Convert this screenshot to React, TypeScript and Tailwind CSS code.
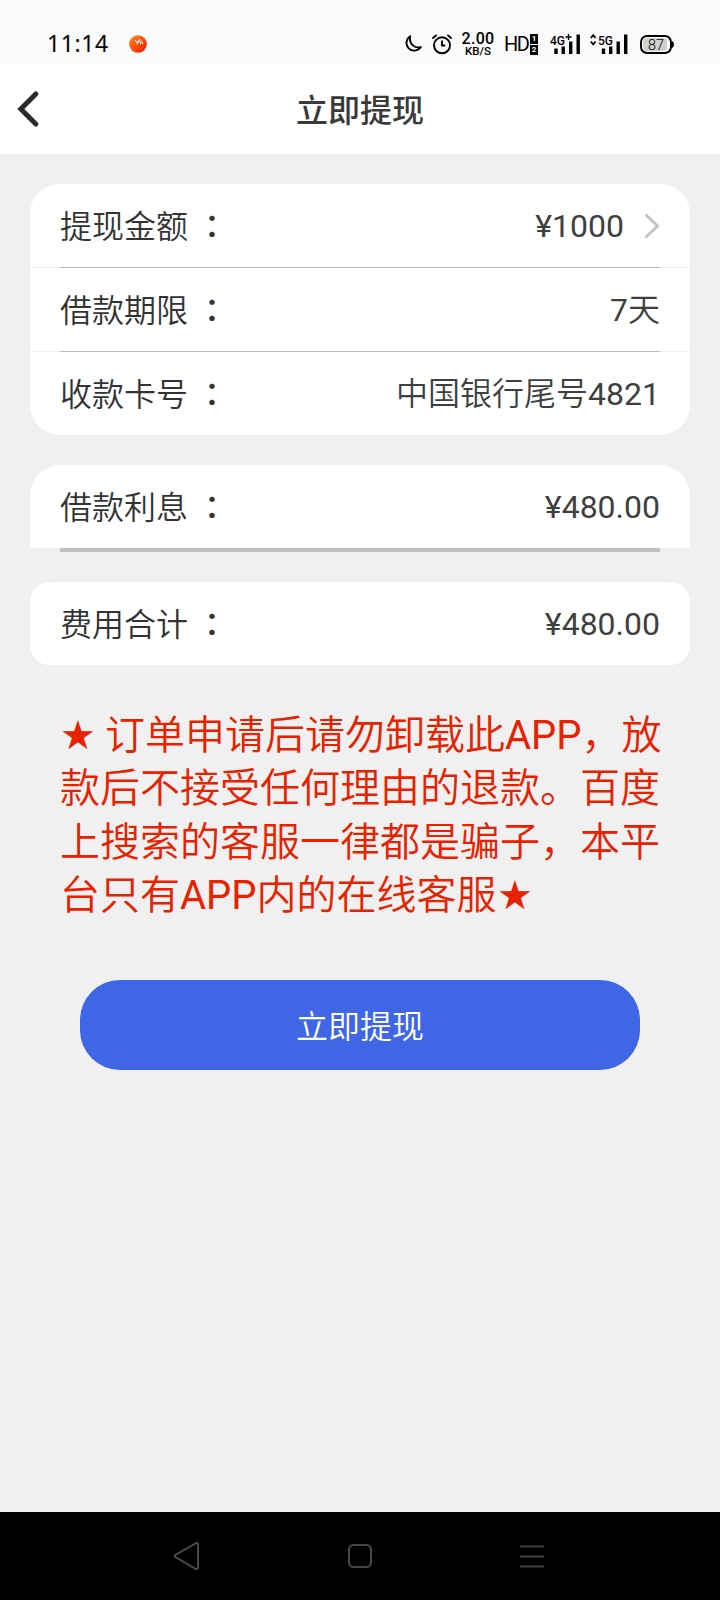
import React from "react";

type RowProps = {
  label: string;
  value: React.ReactNode;
  arrow?: boolean;
};

function StatusBar() {
  return (
    <div className="w-full h-16 bg-[#fafafa] flex items-start justify-between pl-[47px] pr-[46px] text-black">
      <div className="flex items-center h-[46px] mt-[21px]">
        <span className="font-['Noto_Sans'] text-[23px] leading-none tracking-[0.6px] w-[82px] pb-0.5">11:14</span>
        <svg width="18" height="18" viewBox="0 0 18 18">
          <defs>
            <linearGradient id="ball" x1="0" y1="0" x2="1" y2="1">
              <stop offset="0" stopColor="#ff8a1c" />
              <stop offset="0.55" stopColor="#fb4a0c" />
              <stop offset="1" stopColor="#f50a05" />
            </linearGradient>
          </defs>
          <circle cx="9" cy="9" r="8.8" fill="url(#ball)" />
          <path d="M6 5l2 2.500L11 4M7.500 9.500l4-5M11.500 6.500v3M14 9l-1.500-3" fill="none" stroke="#ffe9d8" strokeWidth="1.1" />
        </svg>
      </div>
      <div className="flex items-center h-[46px] mt-[21px]">
        {/* moon */}
        <svg width="18" height="18" viewBox="0 0 18 18" fill="none" stroke="#000" strokeWidth="1.9" strokeLinejoin="round">
          <path d="M6.2 1.2a7.8 7.8 0 1 0 10.6 10.9C11.500 13.800 4.500 9.500 6.200 1.200z" />
        </svg>
        {/* alarm */}
        <svg className="ml-2.5" width="20" height="21" viewBox="0 0 20 21" fill="none" stroke="#000" strokeWidth="1.9" strokeLinecap="round">
          <circle cx="10" cy="11.300" r="8" />
          <path d="M10 7.300v4.200h2.500M1 4l3-2.600M19 4l-3-2.600" />
        </svg>
        <div className="ml-2.5 pt-px w-8 flex flex-col items-center font-[Roboto] font-medium">
          <span className="text-[16px] leading-[12px] tracking-[0.3px]">2.00</span>
          <span className="text-[11.5px] leading-[12px]">KB/S</span>
        </div>
        <span className="ml-2.5 w-[26px] font-[Roboto] text-[20px] leading-none tracking-[-1.5px]">HD</span>
        <div className="flex flex-col gap-px w-2 text-white font-[Roboto] font-bold text-[8px] leading-[10px] text-center">
          <span className="bg-black">1</span>
          <span className="bg-black">2</span>
        </div>
        <svg className="ml-3" width="31" height="21" viewBox="0 0 31 21">
          <g stroke="#000" strokeWidth="3.400">
            <path d="M6 14.500V20M13.200 12.500V20M20.700 7.500V20M28.200 0.500V20" />
          </g>
          <text x="0" y="10.500" className="font-[Roboto] font-medium" fontSize="12.500" textLength="15" lengthAdjust="spacingAndGlyphs">4G</text>
          <path d="M15.500 3h6M18.500 0v6" stroke="#000" strokeWidth="1.400" />
        </svg>
        <svg className="ml-[9px]" width="38" height="21" viewBox="0 0 38 21">
          <path d="M0.800 4L3.200 1.200 5.600 4M0.800 7.500l2.400 2.800 2.400-2.800" fill="none" stroke="#000" strokeWidth="1.800" />
          <g stroke="#000" strokeWidth="3.400">
            <path d="M13.500 14.500V20M20.700 12.500V20M28.200 7.500V20M35.700 0.500V20" />
          </g>
          <text x="8" y="10.500" className="font-[Roboto] font-medium" fontSize="12.500" textLength="15" lengthAdjust="spacingAndGlyphs">5G</text>
        </svg>
        <svg className="ml-3" width="34" height="19" viewBox="0 0 34 19">
          <rect x="1" y="1" width="30" height="17" rx="6" fill="#fafafa" stroke="#000" strokeWidth="1.900" />
          <rect x="3" y="3" width="24" height="13" rx="3.500" fill="#d0d0d0" />
          <path d="M32 6.500c2 1 2 5 0 6z" stroke="#000" />
          <text x="16" y="14.600" textAnchor="middle" className="font-[Roboto] font-light" fontSize="14.500">87</text>
        </svg>
      </div>
    </div>
  );
}

function Header() {
  return (
    <div className="w-full h-[90px] bg-white grid grid-cols-[60px_1fr_60px] items-center">
      <svg className="ml-[17px]" width="22" height="36" viewBox="0 0 22 36" fill="none" stroke="#2b2b2b" strokeWidth="5">
        <path d="M18.800 3L3.800 18l15 15" strokeLinecap="round" />
      </svg>
      <h1 className="pt-[3px] text-center text-[32px] leading-none font-medium text-[#3a3a3a]">立即提现</h1>
    </div>
  );
}

function Row({ label, value, arrow }: RowProps) {
  return (
    <div className="h-[83px] px-[30px] flex items-center justify-between text-[32px] leading-[44px] text-[#3f3f3f]">
      <span className="flex gap-2 pt-[3px] font-[350] text-[#333]">
        {label}
        <span className="-mt-[3px] font-medium font-['Noto_Sans_CJK_TC',sans-serif]">：</span>
      </span>
      <span className="flex items-center">
        <span className="pt-px">{value}</span>
        {arrow && (
          <svg className="ml-5" width="16" height="26" viewBox="0 0 16 26" fill="none" stroke="#c4c4c4" strokeWidth="3">
            <path d="M1.500 1.500L13.500 13l-12 11.500" />
          </svg>
        )}
      </span>
    </div>
  );
}

function Divider() {
  return (
    <div className="h-px bg-[#f0f0f0] px-[30px]">
      <div className="h-px bg-[#bfbfbf]" />
    </div>
  );
}

function Star() {
  return <span className="font-['DejaVu_Sans'] text-[40px] leading-none">★</span>;
}

function Notice() {
  return (
    <div className="mt-11 ml-[60px] h-[214px] text-[40px] leading-[53.4px] font-[350] text-[#e62200] whitespace-nowrap">
      <p className="h-[53.4px]">
        <span className="inline-block w-[45px]">
          <Star />
        </span>
        订单申请后请勿卸载此<span className="font-normal">APP</span>，放
      </p>
      <p className="h-[53.4px]">款后不接受任何理由的退款。百度</p>
      <p className="h-[53.4px]">上搜索的客服一律都是骗子，本平</p>
      <p className="h-[53.4px]">
        台只有<span className="font-normal">APP</span>内的在线客服
        <Star />
      </p>
    </div>
  );
}

function NavBar() {
  return (
    <div className="w-full h-[88px] bg-black flex items-center justify-between pl-[173px] pr-44">
      <svg width="28" height="30" viewBox="0 0 28 30" fill="none" stroke="#484848" strokeWidth="2">
        <path d="M2.500 13.800L22.500 2.300q2.500-1 2.500 1.500v22.500q0 2.500-2.500 1.500L2.500 16.200q-1.800-1.200 0-2.400z" />
      </svg>
      <svg className="-ml-px" width="24" height="24" viewBox="0 0 24 24" fill="none" stroke="#484848" strokeWidth="2">
        <rect x="1" y="1" width="22" height="22" rx="4.500" />
      </svg>
      <svg width="24" height="24" viewBox="0 0 24 24" stroke="#404040" strokeWidth="2">
        <path d="M0 2.500h24M0 12.500h24M0 22.500h24" />
      </svg>
    </div>
  );
}

export default function App() {
  return (
    <div className="w-[720px] h-[1600px] bg-[#f0f0f0] flex flex-col overflow-hidden font-[Roboto,'Noto_Sans_CJK_SC',sans-serif]">
      <StatusBar />
      <Header />
      <div className="mx-[30px] mt-[30px] bg-white rounded-[30px]">
        <Row label="提现金额" value="¥1000" arrow />
        <Divider />
        <Row label="借款期限" value={<>7<span className="font-[350]">天</span></>} />
        <Divider />
        <Row label="收款卡号" value={<><span className="font-[350]">中国银行尾号</span>4821</>} />
      </div>
      <div className="mx-[30px] mt-[30px]">
        <div className="bg-white rounded-t-[30px]">
          <Row label="借款利息" value="¥480.00" />
        </div>
        <div className="mx-[30px] h-1 bg-[#bfbfbf]" />
      </div>
      <div className="mx-[30px] mt-[30px] bg-white rounded-[20px]">
        <Row label="费用合计" value="¥480.00" />
      </div>
      <Notice />
      <button className="mx-20 mt-[57px] pt-[3px] h-[90px] shrink-0 rounded-[40px] bg-[#3f66e4] text-white text-[32px] leading-none font-[350]">立即提现</button>
      <div className="flex-1" />
      <NavBar />
    </div>
  );
}
